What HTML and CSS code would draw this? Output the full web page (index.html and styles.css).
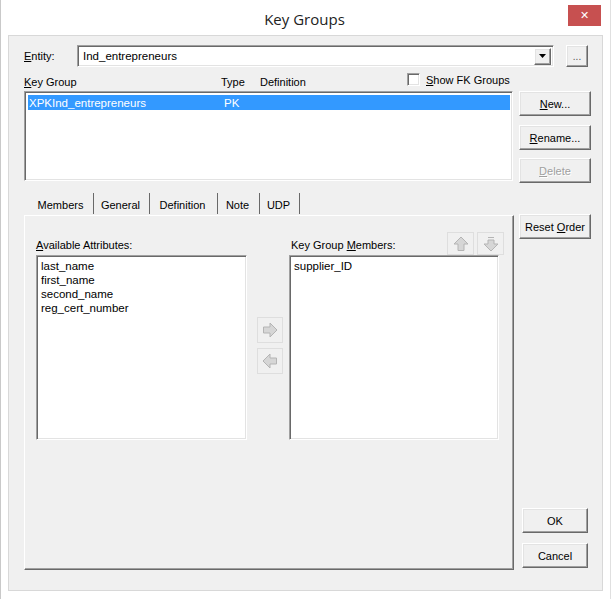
FILE: index.html
```html
<!DOCTYPE html>
<html>
<head>
<meta charset="utf-8">
<link rel="stylesheet" href="styles.css">
</head>
<body>
<div class="window">
  <div class="titlebar">
    <span></span>
    <div class="title">Key Groups</div>
    <div class="close">✕</div>
  </div>
  <div class="client">
    <div class="entity-row">
      <label class="entity-label"><u>E</u>ntity:</label>
      <div class="combo sunken">
        <span class="combo-text">Ind_entrepreneurs</span>
        <span class="combo-btn raised"><svg width="7" height="4" viewBox="0 0 7 4"><polygon points="0,0 7,0 3.5,4" fill="#000"/></svg></span>
      </div>
      <div class="btn raised dots">...</div>
    </div>
    <div class="header-row">
      <span class="col-key"><u>K</u>ey Group</span>
      <span class="col-type">Type</span>
      <span class="col-def">Definition</span>
      <span class="fk"><span class="checkbox"></span><span><u>S</u>how FK Groups</span></span>
    </div>
    <div class="main">
      <div class="left">
        <div class="keylist sunken">
          <div class="row selected"><span class="cell-key">XPKInd_entrepreneurs</span><span class="cell-type">PK</span></div>
        </div>
        <div class="tabs">
          <div class="tab t-members active">Members</div>
          <div class="tab t-general">General</div>
          <div class="tab t-definition">Definition</div>
          <div class="tab t-note">Note</div>
          <div class="tab t-udp">UDP</div>
        </div>
        <div class="panel">
          <div class="group">
            <div class="group-head"><span><u>A</u>vailable Attributes:</span></div>
            <div class="list sunken avail">
              <div class="item">last_name</div>
              <div class="item">first_name</div>
              <div class="item">second_name</div>
              <div class="item">reg_cert_number</div>
            </div>
          </div>
          <div class="movers">
            <div class="abtn"><svg width="16" height="16" viewBox="0 0 16 16"><polygon points="15,8 8,1 8,5 1.5,5 1.5,11 8,11 8,15" fill="#d6d6d6" stroke="#b4b4b4"/></svg></div>
            <div class="abtn"><svg width="16" height="16" viewBox="0 0 16 16"><polygon points="1,8 8,1 8,5 14.5,5 14.5,11 8,11 8,15" fill="#d6d6d6" stroke="#b4b4b4"/></svg></div>
          </div>
          <div class="group members">
            <div class="group-head">
              <span>Key Group <u>M</u>embers:</span>
              <span class="updown">
                <span class="abtn small"><svg width="16" height="16" viewBox="0 0 16 16"><polygon points="8,1 15,8 11,8 11,14.5 5,14.5 5,8 1,8" fill="#d6d6d6" stroke="#b4b4b4"/></svg></span>
                <span class="abtn small"><svg width="16" height="16" viewBox="0 0 16 16"><polygon points="8,15 15,8 11,8 11,4 5,4 5,8 1,8" fill="#d6d6d6" stroke="#b4b4b4"/><line x1="5" y1="1.5" x2="11" y2="1.5" stroke="#b4b4b4"/></svg></span>
              </span>
            </div>
            <div class="list sunken mem">
              <div class="item">supplier_ID</div>
            </div>
          </div>
        </div>
      </div>
      <div class="right">
        <div class="btn raised b-new"><span><u>N</u>ew...</span></div>
        <div class="btn raised b-rename"><span><u>R</u>ename...</span></div>
        <div class="btn raised b-delete disabled"><span><u>D</u>elete</span></div>
        <div class="btn raised b-reset"><span>Reset <u>O</u>rder</span></div>
        <div class="spacer"></div>
        <div class="btn raised b-ok"><span>OK</span></div>
        <div class="btn raised b-cancel"><span>Cancel</span></div>
      </div>
    </div>
  </div>
</div>
</body>
</html>
```
FILE: styles.css
```css
* { box-sizing: border-box; }
html, body { margin: 0; padding: 0; }
body {
  background: #ffffff;
  font-family: "Liberation Sans", Arial, sans-serif;
  font-size: 11px;
  color: #000;
}
u { text-decoration: underline; text-underline-offset: 1px; }

.window {
  width: 611px;
  height: 599px;
  background: #ffffff;
  border-left: 1px solid #c9c9c9;
  border-right: 1px solid #e0e0e0;
  display: flex;
  flex-direction: column;
}
.titlebar {
  height: 35px;
  display: grid;
  grid-template-columns: 1fr auto 1fr;
  flex: none;
}
.title {
  font-family: "Open Sans", "Noto Sans", sans-serif;
  font-size: 15px;
  color: #222;
  line-height: 38px;
  padding-right: 2px;
}
.close {
  justify-self: end;
  align-self: start;
  margin-top: 5px;
  margin-right: 9px;
  width: 33px;
  height: 21px;
  background: #c75050;
  color: #fff;
  font-family: "DejaVu Sans", sans-serif;
  font-size: 11px;
  font-weight: bold;
  display: flex;
  align-items: center;
  justify-content: center;
}
.client {
  margin: 0 7px 8px 7px;
  height: 556px;
  background: #f0f0f0;
  border: 1px solid #d8d8d8;
  padding: 8px 0 0 15px;
  display: flex;
  flex-direction: column;
}

.sunken {
  background: #fff;
  border: 1px solid;
  border-color: #a0a0a0 #ffffff #ffffff #a0a0a0;
  box-shadow: inset 1px 1px 0 #696969, inset -1px -1px 0 #e3e3e3;
}
.raised {
  background: #f0f0f0;
  border: 1px solid;
  border-color: #ffffff #696969 #696969 #ffffff;
  box-shadow: inset -1px -1px 0 #a0a0a0, inset 1px 1px 0 #e3e3e3;
}

.entity-row {
  display: flex;
  align-items: center;
  height: 24px;
}
.entity-label { width: 53px; }
.combo {
  width: 477px;
  height: 22px;
  display: flex;
  align-items: center;
  padding: 0 2px 0 5px;
}
.combo-text { flex: 1; font-size: 11.5px; }
.combo-btn {
  width: 17px;
  height: 17px;
  display: flex;
  align-items: center;
  justify-content: center;
}
.dots {
  margin-left: 12px;
  width: 22px;
  height: 22px;
  font-size: 10px;
  color: #555;
}

.btn {
  display: flex;
  align-items: center;
  justify-content: center;
  flex: none;
}

.header-row {
  display: flex;
  align-items: center;
  height: 23px;
  padding-top: 4px;
}
.col-key { width: 197px; }
.col-type { width: 39px; }
.col-def { width: 149px; }
.fk { display: flex; align-items: center; gap: 6px; margin-top: -4px; margin-left: -2px; }
.checkbox {
  width: 13px;
  height: 13px;
  background: #fff;
  border: 1px solid;
  border-color: #a0a0a0 #fff #fff #a0a0a0;
  box-shadow: inset 1px 1px 0 #696969, inset -1px -1px 0 #e3e3e3;
}

.main {
  display: flex;
  flex: 1;
}
.left {
  width: 490px;
  display: flex;
  flex-direction: column;
}
.keylist {
  width: 489px;
  height: 90px;
  padding: 3px 2px 0 3px;
}
.row {
  display: flex;
  height: 15px;
  align-items: center;
  font-size: 11.5px;
}
.row.selected { background: #3399ff; color: #fff; }
.cell-key { width: 196px; padding-left: 1px; }
.cell-type { width: 40px; }

.tabs {
  display: flex;
  margin-top: 12px;
  height: 22px;
  padding-left: 6px;
  align-items: flex-start;
}
.tab {
  height: 21px;
  padding-top: 4px;
  line-height: 17px;
  text-align: center;
  padding-right: 2px;
  border-right: 1px solid #696969;
}
.t-members { width: 64px; }
.t-general { width: 56px; }
.t-definition { width: 68px; }
.t-note { width: 42px; }
.t-udp { width: 40px; }
.panel {
  width: 490px;
  height: 355px;
  border: 1px solid;
  border-color: #ffffff #696969 #696969 #ffffff;
  box-shadow: inset -1px -1px 0 #a0a0a0;
  display: flex;
  padding: 15px 0 0 11px;
}
.group { display: flex; flex-direction: column; }
.group-head {
  height: 24px;
  display: flex;
  align-items: flex-end;
  justify-content: space-between;
  padding-bottom: 4px;
}
.list {
  height: 185px;
  padding: 3px 4px;
}
.avail { width: 211px; }
.mem { width: 210px; }
.item { height: 14px; line-height: 14px; font-size: 11.5px; }
.movers {
  width: 26px;
  margin-left: 10px;
  padding-top: 86px;
  display: flex;
  flex-direction: column;
  gap: 5px;
}
.abtn {
  width: 26px;
  height: 26px;
  border: 1px solid #dedede;
  display: flex;
  align-items: center;
  justify-content: center;
}
.members { margin-left: 6px; width: 213px; }
.members .group-head { padding-bottom: 3px; align-items: flex-end; }
.members .group-head > span:first-child { padding-bottom: 1px; padding-left: 2px; }
.updown { display: flex; gap: 3px; align-self: flex-start; margin-top: 1px; margin-right: -2px; }
.abtn.small { width: 27px; height: 23px; }

.right {
  width: 72px;
  margin-left: 5px;
  display: flex;
  flex-direction: column;
  padding-bottom: 22px;
}
.right .btn { width: 72px; height: 25px; }
.b-rename { margin-top: 9px; }
.b-delete { margin-top: 8px; }
.b-reset { margin-top: 31px; }
.spacer { flex: 1; }
.right .b-ok { width: 66px; margin-left: 3px; }
.right .b-cancel { width: 66px; margin-left: 3px; margin-top: 10px; }
.disabled { color: #a0a0a0; text-shadow: 1px 1px 0 #fff; }
```
